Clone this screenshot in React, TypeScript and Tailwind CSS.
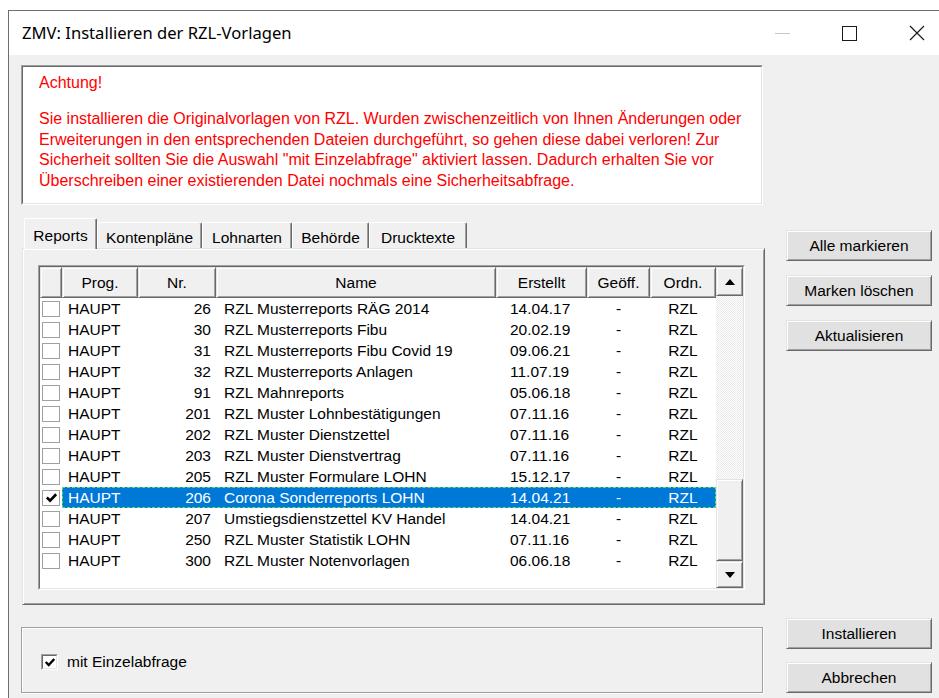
import React from 'react';

// Classic Win32 bevels
const raised =
  'border border-t-[#e3e3e3] border-l-[#e3e3e3] border-r-[#696969] border-b-[#696969] shadow-[inset_1px_1px_0_#ffffff,inset_-1px_-1px_0_#a0a0a0]';
const sunkenOuter = 'border border-t-[#a0a0a0] border-l-[#a0a0a0] border-r-white border-b-white';
const sunkenInner = 'border border-t-[#696969] border-l-[#696969] border-r-[#e3e3e3] border-b-[#e3e3e3]';

const rows: [string, string, string][] = [
  ['26', 'RZL Musterreports RÄG 2014', '14.04.17'],
  ['30', 'RZL Musterreports Fibu', '20.02.19'],
  ['31', 'RZL Musterreports Fibu Covid 19', '09.06.21'],
  ['32', 'RZL Musterreports Anlagen', '11.07.19'],
  ['91', 'RZL Mahnreports', '05.06.18'],
  ['201', 'RZL Muster Lohnbestätigungen', '07.11.16'],
  ['202', 'RZL Muster Dienstzettel', '07.11.16'],
  ['203', 'RZL Muster Dienstvertrag', '07.11.16'],
  ['205', 'RZL Muster Formulare LOHN', '15.12.17'],
  ['206', 'Corona Sonderreports LOHN', '14.04.21'],
  ['207', 'Umstiegsdienstzettel KV Handel', '14.04.21'],
  ['250', 'RZL Muster Statistik LOHN', '07.11.16'],
  ['300', 'RZL Muster Notenvorlagen', '06.06.18'],
];

const SELECTED = '206';

const CheckMark = ({ size = 14 }: { size?: number }) => (
  <svg width={size} height={size} viewBox="0 0 14 14">
    <path d="M2 7 L5.5 10.5 L12 3.5" fill="none" stroke="#000" strokeWidth="2.8" />
  </svg>
);

const Arrow = ({ up }: { up?: boolean }) => (
  <svg width="10" height="6" viewBox="0 0 10 6">
    <path d={up ? 'M0 6 L5 0 L10 6 Z' : 'M0 0 L5 6 L10 0 Z'} fill="#000" />
  </svg>
);

const Button = ({ label, className = '' }: { label: string; className?: string }) => (
  <div className={`h-[31px] w-[146px] flex items-center justify-center bg-[#e1e1e1] text-[15.5px] text-black ${raised} ${className}`}>
    {label}
  </div>
);

const HeaderCell = ({ w, label }: { w: string; label?: string }) => (
  <div className={`${w} h-[31px] shrink-0 flex items-center justify-center bg-[#f0f0f0] ${raised}`}>{label}</div>
);

const tabs = [
  { label: 'Reports', w: 'w-[73px]' },
  { label: 'Kontenpläne', w: 'w-[105px]' },
  { label: 'Lohnarten', w: 'w-[90px]' },
  { label: 'Behörde', w: 'w-[77px]' },
  { label: 'Drucktexte', w: 'w-[98px]' },
];

export default function App() {
  return (
    <div className="w-[939px] h-[698px] overflow-hidden bg-white pl-2 pt-[10px] font-['Liberation_Sans',Arial,sans-serif] text-black">
      <div className="w-[942px] h-[700px] border-l border-t border-[#6e6e6e] flex flex-col bg-[#f0f0f0]">
        {/* title bar */}
        <div className="h-[44px] shrink-0 bg-white flex items-center">
          <span className="pl-[13px] text-[16.6px] text-black font-['Noto_Sans',sans-serif]">ZMV: Installieren der RZL-Vorlagen</span>
          <div className="ml-auto flex h-full">
            <div className="w-[67px] flex items-center justify-center">
              <div className="w-[15px] h-px bg-[#c6c6c6]" />
            </div>
            <div className="w-[67px] flex items-center justify-center">
              <div className="w-[15px] h-[15px] border border-[#1a1a1a]" />
            </div>
            <div className="w-[67px] flex items-center justify-center">
              <svg width="16" height="16" viewBox="0 0 16 16">
                <path d="M1 1 L15 15 M15 1 L1 15" stroke="#1a1a1a" strokeWidth="1.2" />
              </svg>
            </div>
          </div>
        </div>

        {/* client area */}
        <div className="flex-1 flex">
          <div className="pl-3 pt-[10px] w-[754px] shrink-0 flex flex-col">
            {/* warning box */}
            <div className={`h-[140px] w-[742px] bg-white ${sunkenOuter}`}>
              <div className={`h-full pl-[16px] pt-[6px] text-[#ff0000] text-[16px] leading-[20.5px] ${sunkenInner}`}>
                <div>Achtung!</div>
                <div className="mt-[15.5px] whitespace-nowrap">
                  <div>Sie installieren die Originalvorlagen von RZL. Wurden zwischenzeitlich von Ihnen Änderungen oder</div>
                  <div>Erweiterungen in den entsprechenden Dateien durchgeführt, so gehen diese dabei verloren! Zur</div>
                  <div>Sicherheit sollten Sie die Auswahl "mit Einzelabfrage" aktiviert lassen. Dadurch erhalten Sie vor</div>
                  <div>Überschreiben einer existierenden Datei nochmals eine Sicherheitsabfrage.</div>
                </div>
              </div>
            </div>

            {/* tab strip */}
            <div className="mt-[13px] ml-[1px] relative z-10 -mb-px flex items-end pl-[2px] h-[31px] text-[15.5px]">
              {tabs.map((t, i) =>
                i === 0 ? (
                  <div
                    key={t.label}
                    className={`${t.w} h-[31px] bg-[#f0f0f0] flex justify-center pt-[5px] border-l border-t border-r border-l-white border-t-white border-r-[#696969] shadow-[inset_-1px_0_0_#a0a0a0] rounded-t-[2px]`}
                  >
                    {t.label}
                  </div>
                ) : (
                  <div
                    key={t.label}
                    className={`${t.w} h-[26px] mb-px flex justify-center pt-[3px] border-l border-t border-r border-l-white border-t-white border-r-[#696969] shadow-[inset_-1px_0_0_#a0a0a0] rounded-t-[2px]`}
                  >
                    {t.label}
                  </div>
                )
              )}
            </div>

            {/* tab page */}
            <div className={`ml-[1px] w-[743px] h-[357px] pl-[15px] pt-[16px] ${raised} shadow-[inset_-1px_-1px_0_#a0a0a0]`}>
              <div className={`w-[707px] h-[325px] ${sunkenOuter}`}>
                <div className={`h-full flex bg-white ${sunkenInner}`}>
                  <div className="w-[676px] flex flex-col text-[15.5px]">
                    <div className="flex">
                      <HeaderCell w="w-[22px]" />
                      <HeaderCell w="w-[76px]" label="Prog." />
                      <HeaderCell w="w-[78px]" label="Nr." />
                      <HeaderCell w="w-[280px]" label="Name" />
                      <HeaderCell w="w-[91px]" label="Erstellt" />
                      <HeaderCell w="w-[63px]" label="Geöff." />
                      <HeaderCell w="w-[66px]" label="Ordn." />
                    </div>
                    {rows.map(([nr, name, date]) => {
                      const sel = nr === SELECTED;
                      return (
                        <div key={nr} className="flex h-[21px] items-center">
                          <div className="w-[22px] shrink-0 pl-[2px]">
                            <div className="w-[18px] h-[16px] border border-[#a0a0a0] bg-white flex items-center justify-center">
                              {sel && <CheckMark size={13} />}
                            </div>
                          </div>
                          <div
                            className={`flex h-full items-center ${
                              sel ? 'bg-[#0078d7] text-white outline-1 outline-dashed outline-[#5fe05f] -outline-offset-1' : ''
                            }`}
                          >
                            <div className="w-[76px] pl-[6px]">HAUPT</div>
                            <div className="w-[78px] pr-[5px] text-right">{nr}</div>
                            <div className="w-[280px] pl-[8px] whitespace-nowrap">{name}</div>
                            <div className="w-[91px] pl-[14px]">{date}</div>
                            <div className="w-[63px] text-center">-</div>
                            <div className="w-[66px] text-center">RZL</div>
                          </div>
                        </div>
                      );
                    })}
                  </div>
                  {/* scrollbar */}
                  <div className="w-[27px] flex flex-col">
                    <div className={`h-[29px] flex items-center justify-center bg-[#f0f0f0] ${raised}`}>
                      <Arrow up />
                    </div>
                    <div className="flex-1 bg-[image:repeating-conic-gradient(#ffffff_0%_25%,#e9e9e9_0%_50%)] bg-[length:2px_2px]" />
                    <div className={`h-[82px] bg-[#f0f0f0] ${raised}`} />
                    <div className={`h-[27px] flex items-center justify-center bg-[#f0f0f0] ${raised}`}>
                      <Arrow />
                    </div>
                  </div>
                </div>
              </div>
            </div>

            {/* options group */}
            <div className="mt-[22px] w-[742px] h-[66px] border border-[#a0a0a0] shadow-[inset_1px_1px_0_#ffffff,1px_1px_0_#ffffff] flex items-center pl-[19px] pt-[3px]">
              <div className={`w-[17px] h-[16px] bg-white ${sunkenOuter}`}>
                <div className={`h-full flex items-center justify-center ${sunkenInner}`}>
                  <CheckMark size={12} />
                </div>
              </div>
              <span className="ml-[9px] text-[15.5px]">mit Einzelabfrage</span>
            </div>
          </div>

          {/* command buttons */}
          <div className="pl-[23px] flex flex-col">
            <Button label="Alle markieren" className="mt-[175px]" />
            <Button label="Marken löschen" className="mt-[14px]" />
            <Button label="Aktualisieren" className="mt-[14px]" />
            <Button label="Installieren" className="mt-[267px]" />
            <Button label="Abbrechen" className="mt-[13px]" />
          </div>
        </div>
      </div>
    </div>
  );
}
